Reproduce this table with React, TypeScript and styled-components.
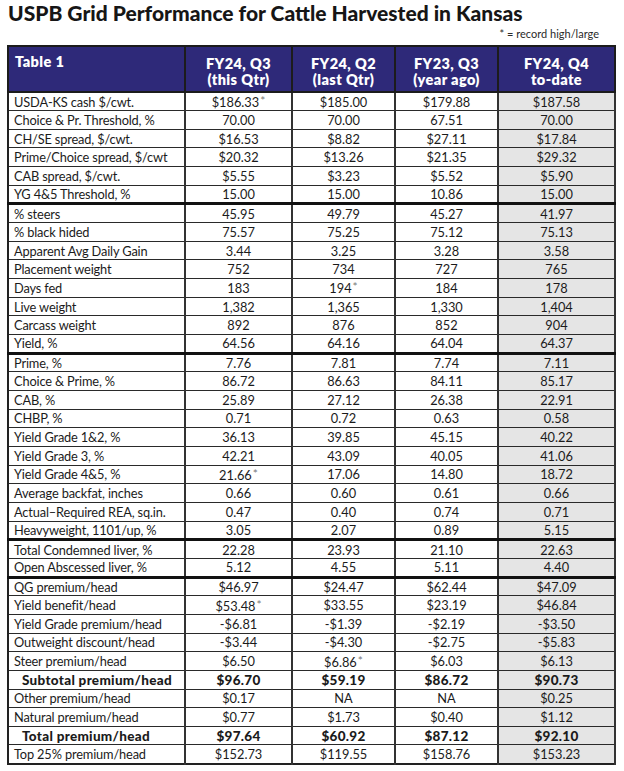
import React from "react";
import styled, { createGlobalStyle } from "styled-components";

const Global = createGlobalStyle`
  html, body { margin: 0; padding: 0; background: #ffffff; }
  body { font-family: Lato, "Noto Sans", sans-serif; color: #1b1b1b; }
`;

const Page = styled.div`
  width: 624px;
  height: 771px;
  box-sizing: border-box;
  padding-left: 7px;
  overflow: hidden;
`;

const Title = styled.h1`
  margin: 0;
  padding-left: 1px;
  height: 26px;
  font-size: 21px;
  line-height: 26px;
  font-weight: 900;
  color: #161616;
  white-space: nowrap;
`;

const Note = styled.div`
  width: 592px;
  height: 19px;
  text-align: right;
  font-size: 11px;
  line-height: 15px;
  color: #2a2a2a;
`;

const Grid = styled.table`
  border-collapse: collapse;
  table-layout: fixed;
  width: 607px;
  border: 2px solid #222;
`;

const HeadCell = styled.th<{ $left?: boolean }>`
  background: #2e2979;
  color: #ffffff;
  font-weight: 800;
  font-size: 14.5px;
  letter-spacing: 0.4px;
  line-height: 16px;
  height: 46px;
  padding: ${(p) => (p.$left ? "7px 0 0 6px" : "5px 0 0 0")};
  box-sizing: border-box;
  text-align: ${(p) => (p.$left ? "left" : "center")};
  vertical-align: ${(p) => (p.$left ? "top" : "middle")};
  border: 2px solid #1c1c1c;
`;

const Row = styled.tr<{ $thick?: boolean }>`
  height: 18.67px;
  & > td {
    border-top: ${(p) => (p.$thick ? "3px solid #111" : "1px solid #2a2a2a")};
  }
`;

const LabelCell = styled.td<{ $bold?: boolean }>`
  padding: 0 0 0 ${(p) => (p.$bold ? "13px" : "5px")};
  font-size: ${(p) => (p.$bold ? "13.5px" : "12.8px")};
  letter-spacing: ${(p) => (p.$bold ? "0.3px" : "-0.15px")};
  font-weight: ${(p) => (p.$bold ? 900 : 400)};
  line-height: 16px;
  white-space: nowrap;
  overflow: hidden;
  border-left: 2px solid #222;
  border-right: 2px solid #333;
`;

const ValueCell = styled.td<{ $bold?: boolean; $shade?: boolean }>`
  padding: 0;
  text-align: center;
  font-size: ${(p) => (p.$bold ? "13.5px" : "12.8px")};
  letter-spacing: ${(p) => (p.$bold ? "0.3px" : "0")};
  font-weight: ${(p) => (p.$bold ? 900 : 400)};
  line-height: 16px;
  white-space: nowrap;
  background: ${(p) => (p.$shade ? "#e5e5e5" : "#ffffff")};
  border-left: 2px solid #333;
  border-right: 2px solid #333;
`;

const Star = styled.span`
  font-size: 12px;
  color: #7a7a7a;
  vertical-align: 2px;
  margin-left: 1px;
`;

type RowData = {
  label: string;
  vals: [string, string, string, string];
  thick?: boolean;
  bold?: boolean;
};

const rows: RowData[] = [
  { label: "USDA-KS cash $/cwt.", vals: ["$186.33*", "$185.00", "$179.88", "$187.58"] },
  { label: "Choice & Pr. Threshold, %", vals: ["70.00", "70.00", "67.51", "70.00"] },
  { label: "CH/SE spread, $/cwt.", vals: ["$16.53", "$8.82", "$27.11", "$17.84"] },
  { label: "Prime/Choice spread, $/cwt", vals: ["$20.32", "$13.26", "$21.35", "$29.32"] },
  { label: "CAB spread, $/cwt.", vals: ["$5.55", "$3.23", "$5.52", "$5.90"] },
  { label: "YG 4&5 Threshold, %", vals: ["15.00", "15.00", "10.86", "15.00"] },
  { label: "% steers", vals: ["45.95", "49.79", "45.27", "41.97"], thick: true },
  { label: "% black hided", vals: ["75.57", "75.25", "75.12", "75.13"] },
  { label: "Apparent Avg Daily Gain", vals: ["3.44", "3.25", "3.28", "3.58"] },
  { label: "Placement weight", vals: ["752", "734", "727", "765"] },
  { label: "Days fed", vals: ["183", "194*", "184", "178"] },
  { label: "Live weight", vals: ["1,382", "1,365", "1,330", "1,404"] },
  { label: "Carcass weight", vals: ["892", "876", "852", "904"] },
  { label: "Yield, %", vals: ["64.56", "64.16", "64.04", "64.37"] },
  { label: "Prime, %", vals: ["7.76", "7.81", "7.74", "7.11"], thick: true },
  { label: "Choice & Prime, %", vals: ["86.72", "86.63", "84.11", "85.17"] },
  { label: "CAB, %", vals: ["25.89", "27.12", "26.38", "22.91"] },
  { label: "CHBP, %", vals: ["0.71", "0.72", "0.63", "0.58"] },
  { label: "Yield Grade 1&2, %", vals: ["36.13", "39.85", "45.15", "40.22"] },
  { label: "Yield Grade 3, %", vals: ["42.21", "43.09", "40.05", "41.06"] },
  { label: "Yield Grade 4&5, %", vals: ["21.66*", "17.06", "14.80", "18.72"] },
  { label: "Average backfat, inches", vals: ["0.66", "0.60", "0.61", "0.66"] },
  { label: "Actual–Required REA, sq.in.", vals: ["0.47", "0.40", "0.74", "0.71"] },
  { label: "Heavyweight, 1101/up, %", vals: ["3.05", "2.07", "0.89", "5.15"] },
  { label: "Total Condemned liver, %", vals: ["22.28", "23.93", "21.10", "22.63"], thick: true },
  { label: "Open Abscessed liver, %", vals: ["5.12", "4.55", "5.11", "4.40"] },
  { label: "QG premium/head", vals: ["$46.97", "$24.47", "$62.44", "$47.09"], thick: true },
  { label: "Yield benefit/head", vals: ["$53.48*", "$33.55", "$23.19", "$46.84"] },
  { label: "Yield Grade premium/head", vals: ["-$6.81", "-$1.39", "-$2.19", "-$3.50"] },
  { label: "Outweight discount/head", vals: ["-$3.44", "-$4.30", "-$2.75", "-$5.83"] },
  { label: "Steer premium/head", vals: ["$6.50", "$6.86*", "$6.03", "$6.13"] },
  { label: "Subtotal premium/head", vals: ["$96.70", "$59.19", "$86.72", "$90.73"], bold: true },
  { label: "Other premium/head", vals: ["$0.17", "NA", "NA", "$0.25"] },
  { label: "Natural premium/head", vals: ["$0.77", "$1.73", "$0.40", "$1.12"] },
  { label: "Total premium/head", vals: ["$97.64", "$60.92", "$87.12", "$92.10"], bold: true },
  { label: "Top 25% premium/head", vals: ["$152.73", "$119.55", "$158.76", "$153.23"] },
];

const heads: [string, string][] = [
  ["FY24, Q3", "(this Qtr)"],
  ["FY24, Q2", "(last Qtr)"],
  ["FY23, Q3", "(year ago)"],
  ["FY24, Q4", "to-date"],
];

const widths = [177, 107, 103, 103, 117];

function Value({ text }: { text: string }) {
  if (text.endsWith("*")) {
    return (
      <>
        {text.slice(0, -1)}
        <Star>*</Star>
      </>
    );
  }
  return <>{text}</>;
}

export default function App() {
  return (
    <Page>
      <Global />
      <Title>USPB Grid Performance for Cattle Harvested in Kansas</Title>
      <Note>* = record high/large</Note>
      <Grid>
        <colgroup>
          {widths.map((w, i) => (
            <col key={i} style={{ width: w }} />
          ))}
        </colgroup>
        <thead>
          <tr>
            <HeadCell $left>Table 1</HeadCell>
            {heads.map(([a, b]) => (
              <HeadCell key={a + b}>
                {a}
                <br />
                {b}
              </HeadCell>
            ))}
          </tr>
        </thead>
        <tbody>
          {rows.map((r) => (
            <Row key={r.label} $thick={r.thick}>
              <LabelCell $bold={r.bold}>{r.label}</LabelCell>
              {r.vals.map((v, i) => (
                <ValueCell key={i} $bold={r.bold} $shade={i === 3}>
                  <Value text={v} />
                </ValueCell>
              ))}
            </Row>
          ))}
        </tbody>
      </Grid>
    </Page>
  );
}
